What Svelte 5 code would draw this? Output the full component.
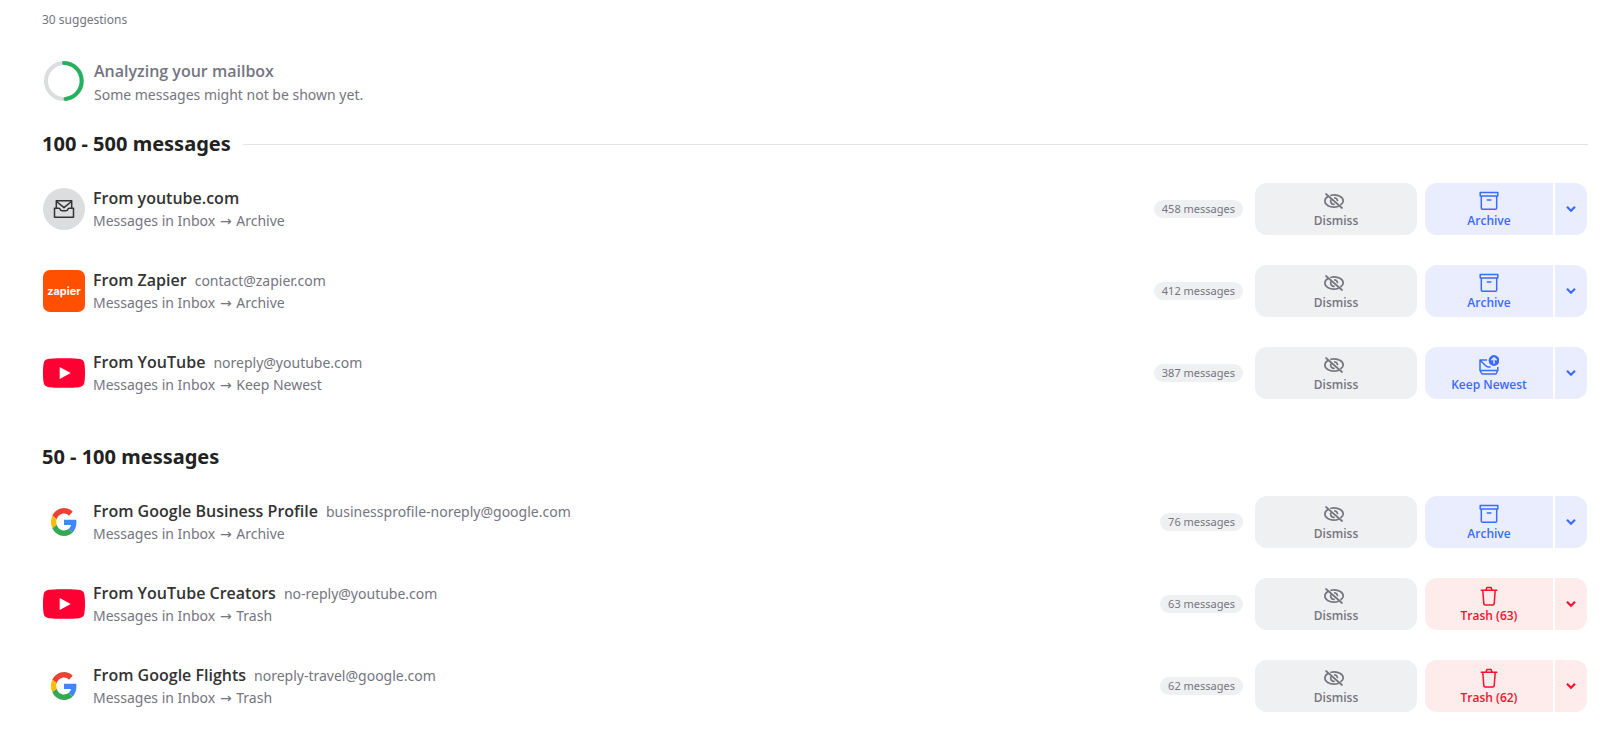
<script lang="ts">
  type Action = "archive" | "newest" | "trash";
  type Suggestion = {
    logo: "inbox" | "zapier" | "youtube" | "google";
    name: string;
    email?: string;
    target: string;
    count: number;
    action: Action;
    label: string;
  };

  const total = 30;

  const groups: { title: string; line: boolean; items: Suggestion[] }[] = [
    {
      title: "100 - 500 messages",
      line: true,
      items: [
        { logo: "inbox", name: "youtube.com", target: "Archive", count: 458, action: "archive", label: "Archive" },
        { logo: "zapier", name: "Zapier", email: "contact@zapier.com", target: "Archive", count: 412, action: "archive", label: "Archive" },
        { logo: "youtube", name: "YouTube", email: "noreply@youtube.com", target: "Keep Newest", count: 387, action: "newest", label: "Keep Newest" },
      ],
    },
    {
      title: "50 - 100 messages",
      line: false,
      items: [
        { logo: "google", name: "Google Business Profile", email: "businessprofile-noreply@google.com", target: "Archive", count: 76, action: "archive", label: "Archive" },
        { logo: "youtube", name: "YouTube Creators", email: "no-reply@youtube.com", target: "Trash", count: 63, action: "trash", label: "Trash (63)" },
        { logo: "google", name: "Google Flights", email: "noreply-travel@google.com", target: "Trash", count: 62, action: "trash", label: "Trash (62)" },
      ],
    },
  ];
</script>

{#snippet logo(kind: string)}
  {#if kind === "inbox"}
    <span class="avatar round">
      <svg width="22" height="22" viewBox="0 0 22 22" fill="none" stroke="#333" stroke-width="1.5" stroke-linejoin="round">
        <path d="M3.300 10V2.700h15.400V10M3.500 3.500l7.500 6.200 7.500-6.200" />
        <path d="M1.500 10.200h4.400c.7 0 1 .4 1.200 1 .3 1 1 1.600 2 1.600h3.800c1 0 1.700-.6 2-1.600.2-.6.5-1 1.200-1h4.400v9H1.500z" />
      </svg>
    </span>
  {:else if kind === "zapier"}
    <span class="avatar zapier">zapier</span>
  {:else if kind === "youtube"}
    <span class="avatar">
      <svg width="42" height="42" viewBox="0 0 42 42">
        <path fill="#ff0033" d="M21 6.300c-7 0-13 .2-16 .8C2.400 7.700 1 9 .6 11.500.1 14.500 0 18 0 21s.1 6.500.6 9.500C1 33 2.400 34.300 5 34.900c3 .6 9 .8 16 .8s13-.2 16-.8c2.600-.6 4-1.900 4.400-4.400.5-3 .6-6.500.6-9.500s-.1-6.500-.6-9.500C41 9 39.600 7.700 37 7.100c-3-.6-9-.8-16-.8z" />
        <path fill="#fff" d="M16.700 15v12l11-6z" />
      </svg>
    </span>
  {:else}
    <span class="avatar">
      <svg width="26" height="28" viewBox="0 0 48 48" preserveAspectRatio="none">
        <path fill="#ea4335" d="M24 9.500c3.540 0 6.710 1.220 9.210 3.600l6.850-6.850C35.900 2.380 30.470 0 24 0 14.620 0 6.510 5.380 2.560 13.220l7.980 6.190C12.430 13.720 17.740 9.500 24 9.500z" />
        <path fill="#4285f4" d="M46.980 24.550c0-1.570-.15-3.090-.38-4.550H24v9.020h12.940c-.58 2.960-2.260 5.480-4.780 7.180l7.730 6c4.510-4.180 7.090-10.360 7.090-17.650z" />
        <path fill="#fbbc05" d="M10.530 28.590c-.48-1.450-.76-2.990-.76-4.590s.27-3.140.76-4.590l-7.980-6.190C.92 16.460 0 20.120 0 24c0 3.880.92 7.540 2.560 10.780l7.970-6.190z" />
        <path fill="#34a853" d="M24 48c6.480 0 11.930-2.130 15.890-5.810l-7.730-6c-2.150 1.450-4.920 2.300-8.160 2.300-6.260 0-11.570-4.220-13.470-9.910l-7.980 6.190C6.510 42.620 14.620 48 24 48z" />
      </svg>
    </span>
  {/if}
{/snippet}

{#snippet actionIcon(kind: Action)}
  {#if kind === "archive"}
    <svg width="20" height="20" viewBox="0 0 20 20" fill="none" stroke="currentColor" stroke-width="1.5" stroke-linejoin="round" stroke-linecap="round">
      <path d="M1.200 1.500h17.600v3.500H1.200zM2.300 5v12c0 .8.400 1.200 1.200 1.200h13c.8 0 1.200-.4 1.200-1.200V5M8.300 9h3.600" />
    </svg>
  {:else if kind === "newest"}
    <svg width="20" height="20" viewBox="0 0 20 20" fill="none" stroke="currentColor" stroke-width="1.5" stroke-linejoin="round">
      <path d="M8 5H1v10.500L3 19h14l1.800-3.500V12M1 15.500h17.800M1.300 5.500l6 5.700c1.300 1 2.500 1.200 4.200.5" />
      <circle cx="15" cy="5.500" r="5.400" fill="currentColor" stroke="none" />
      <path d="M15 8.700V3M12.400 5.300L15 2.700l2.600 2.600" stroke="#e9edfd" stroke-width="1.4" />
    </svg>
  {:else}
    <svg width="20" height="20" viewBox="0 0 20 20" fill="none" stroke="currentColor" stroke-width="1.5" stroke-linejoin="round" stroke-linecap="round">
      <path d="M2.200 4.200h15.600M7 4l.9-2.600h4.200L13 4M3.800 4.500l1 13.200c.1.900.5 1.300 1.300 1.300h7.800c.8 0 1.200-.4 1.300-1.300l1-13.200" />
    </svg>
  {/if}
{/snippet}

<main>
  <p class="total">{total} suggestions</p>

  <div class="status">
    <svg width="42" height="42" viewBox="0 0 42 42" fill="none" stroke-width="4">
      <circle cx="21" cy="21" r="18" stroke="#dcdddf" />
      <path d="M21 3a18 18 0 0 1 1.500 35.900" stroke="#23b15d" stroke-linecap="round" />
    </svg>
    <div>
      <p class="status-title">Analyzing your mailbox</p>
      <p class="status-text">Some messages might not be shown yet.</p>
    </div>
  </div>

  {#each groups as group}
    <section>
      <h2 class:line={group.line}>{group.title}</h2>
      <ul>
        {#each group.items as item}
          <li>
            {@render logo(item.logo)}
            <div class="info">
              <div class="from">
                <span class="name">From {item.name}</span>
                {#if item.email}<span class="email">{item.email}</span>{/if}
              </div>
              <div class="rule">Messages in Inbox <span class="arrow">→</span> {item.target}</div>
            </div>
            <span class="count">{item.count} messages</span>
            <button class="dismiss">
              <svg width="24" height="20" viewBox="0 0 24 20" fill="none" stroke="currentColor" stroke-width="1.7" stroke-linecap="round">
                <path d="M7 4.300c1-.3 2-.4 3-.4 4.600 0 9.200 2.300 9.200 6.100 0 1.300-.8 2.500-2.200 3.500M4 5.500C2 6.600.9 8.200.9 10c0 3.800 4.500 6.100 9.100 6.100 1.500 0 2.800-.2 4-.6M10.800 6.900c1.500.2 2.400 1.200 2.700 2.600M6.700 9.200c-.4 2.300 1 4.100 3.300 4.200M2 3l16 14" />
              </svg>
              Dismiss
            </button>
            <div class="split {item.action}">
              <button class="apply">
                {@render actionIcon(item.action)}
                {item.label}
              </button>
              <button class="more" aria-label="More actions">
                <svg width="10" height="8" viewBox="0 0 10 8" fill="none" stroke="currentColor" stroke-width="2.2">
                  <path d="M1 1.800l4 4 4-4" />
                </svg>
              </button>
            </div>
          </li>
        {/each}
      </ul>
    </section>
  {/each}
</main>

<style>
  :global(body) {
    margin: 0;
    background: #fff;
  }
  main {
    padding: 11px 12px 0 42px;
    font-family: "Noto Sans", "Open Sans", sans-serif;
    color: #75757f;
  }
  p,
  h2,
  ul {
    margin: 0;
    padding: 0;
  }
  svg {
    display: block;
    flex: none;
  }
  .total {
    font-size: 12px;
    line-height: 18px;
  }
  .status {
    display: flex;
    align-items: center;
    gap: 9px;
    margin: 25px 1px 23px;
  }
  .status-title,
  .name {
    font-family: "Open Sans", "Noto Sans", sans-serif;
    font-size: 16px;
    font-weight: 600;
  }
  .status-title {
    padding-top: 5px;
    line-height: 24px;
  }
  .status-text {
    font-size: 14px;
    line-height: 24px;
  }
  section {
    margin-bottom: 29px;
  }
  h2 {
    display: flex;
    align-items: center;
    gap: 12px;
    margin-bottom: 10px;
    font-size: 20px;
    font-weight: 700;
    line-height: 28px;
    color: #222;
  }
  h2.line::after {
    content: "";
    flex: 1;
    height: 1px;
    background: #e3e3e5;
  }
  ul {
    list-style: none;
  }
  li {
    display: flex;
    align-items: center;
    height: 82px;
    padding: 0 1px;
  }
  .avatar {
    flex: none;
    display: flex;
    align-items: center;
    justify-content: center;
    width: 42px;
    height: 42px;
  }
  .round {
    border-radius: 50%;
    background: #dcdddf;
  }
  .zapier {
    border-radius: 7px;
    background: #ff4f00;
    color: #fff;
    font-family: Inter, sans-serif;
    font-size: 11px;
    font-weight: 700;
  }
  .info {
    flex: 1;
    min-width: 0;
    margin-left: 8px;
  }
  .from {
    display: flex;
    align-items: baseline;
    gap: 8px;
    line-height: 23px;
  }
  .name {
    color: #333;
  }
  .email,
  .rule {
    font-size: 14px;
  }
  .rule {
    line-height: 22px;
  }
  .arrow {
    margin: 0 1px;
    font-family: "DejaVu Sans", sans-serif;
    line-height: 1;
  }
  .count {
    margin-right: 12px;
    padding: 0 8px;
    border-radius: 9px;
    background: #eff0f2;
    font-size: 11px;
    line-height: 18px;
  }
  button {
    display: flex;
    flex-direction: column;
    align-items: center;
    justify-content: center;
    height: 52px;
    padding: 4px 0 0;
    border: 0;
    font-family: "Open Sans", "Noto Sans", sans-serif;
    font-size: 12px;
    font-weight: 600;
    line-height: 20px;
    cursor: pointer;
  }
  .dismiss {
    width: 162px;
    margin-right: 8px;
    border-radius: 12px;
    background: #eff0f2;
    color: #75757f;
  }
  .split {
    display: flex;
    gap: 2px;
    color: #3b6cff;
  }
  .split button {
    background: #e9edfd;
    color: inherit;
  }
  .split.trash {
    color: #f4122d;
  }
  .split.trash button {
    background: #feebeb;
  }
  .apply {
    width: 128px;
    border-radius: 12px 0 0 12px;
  }
  .split .more {
    width: 32px;
    padding: 0;
    border-radius: 0 12px 12px 0;
  }
</style>
